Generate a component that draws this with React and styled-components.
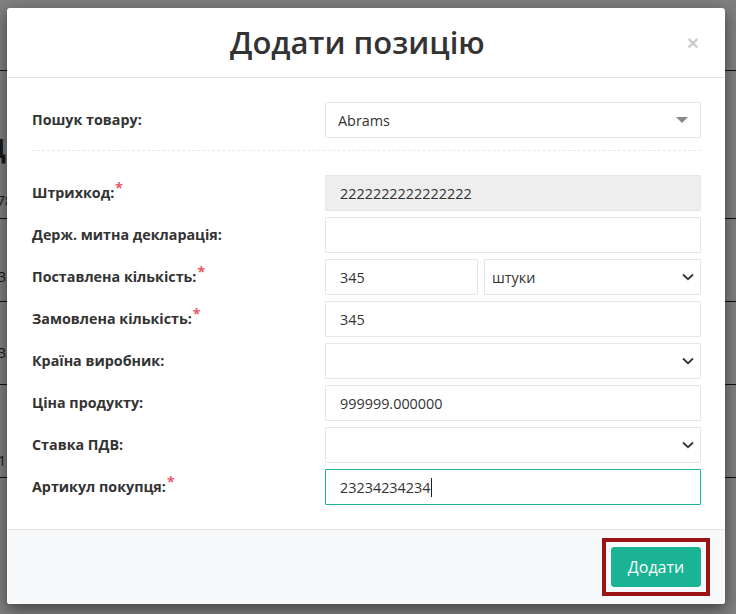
import React from "react";
import styled, { createGlobalStyle } from "styled-components";

const Global = createGlobalStyle`
  html, body { margin: 0; padding: 0; }
  body { font-family: "Open Sans", "Noto Sans", sans-serif; background: #fff; }
  * { box-sizing: border-box; }
`;

const Screen = styled.div`
  position: relative;
  width: 736px;
  height: 614px;
  overflow: hidden;
  background: #fff;
`;

/* ---------- page underneath the modal ---------- */
const BgPage = styled.div`
  display: flex;
  flex-direction: column;
  color: #333;
`;
const BgTopBar = styled.div`
  height: 71px;
  border-bottom: 1px solid #222;
`;
const BgHeading = styled.h2`
  margin: 62px 0 0 -14px;
  font-size: 26px;
  font-weight: 700;
  line-height: 30px;
  height: 28px;
`;
const BgRow = styled.div`
  height: ${(p) => p.$h}px;
  display: flex;
  align-items: flex-end;
  padding-bottom: ${(p) => p.$pb}px;
  border-bottom: 1px solid #222;
  font-size: 14px;
  line-height: 16px;
`;
const BgCell = styled.span`
  margin-left: ${(p) => p.$shift}px;
`;

const Backdrop = styled.div`
  position: absolute;
  inset: 0;
  background: rgba(0, 0, 0, 0.5);
`;

/* ---------- modal ---------- */
const Modal = styled.div`
  position: absolute;
  left: 7px;
  top: 8px;
  width: 718px;
  background: #fff;
  border-radius: 3px;
  box-shadow: 0 5px 15px rgba(0, 0, 0, 0.5);
  display: flex;
  flex-direction: column;
  overflow: hidden;
`;

const Header = styled.div`
  height: 70px;
  border-bottom: 1px solid #e5e5e5;
  display: grid;
  grid-template-columns: 1fr auto;
  align-items: center;
  padding: 0 26px 0 21px;
`;
const Title = styled.h4`
  margin: 0;
  text-align: center;
  font-size: 31px;
  font-weight: 600;
  color: #333;
  line-height: 38px;
  padding-bottom: 2px;
`;
const Close = styled.button`
  border: 0;
  background: transparent;
  padding: 0;
  font-family: "Liberation Sans", Arial, sans-serif;
  font-size: 21px;
  font-weight: 700;
  line-height: 1;
  color: #000;
  opacity: 0.2;
  cursor: pointer;
`;

const Body = styled.div`
  padding: 24px 24px 24px 25px;
  display: flex;
  flex-direction: column;
`;
const Divider = styled.div`
  border-top: 1px dashed #e7eaec;
  margin: 12px 0 24px;
`;
const Fields = styled.div`
  display: flex;
  flex-direction: column;
  gap: 6px;
`;
const Row = styled.div`
  display: grid;
  grid-template-columns: 293px 1fr;
  align-items: center;
  min-height: 36px;
`;
const Label = styled.label`
  font-size: 14.3px;
  font-weight: 700;
  color: #333;
  line-height: 20px;
`;
const Req = styled.span`
  color: #ed5565;
  font-size: 14px;
  position: relative;
  top: -5px;
  margin-left: 1px;
`;
const Pair = styled.div`
  display: grid;
  grid-template-columns: 153px 1fr;
  gap: 6px;
`;

const Input = styled.input`
  width: 100%;
  height: 36px;
  border: 1px solid #e5e6e7;
  border-radius: 1px;
  background: ${(p) => (p.disabled ? "#eeeeee" : "#fff")};
  padding: 0 14px;
  font-family: "Open Sans", sans-serif;
  font-size: 14.4px;
  color: #333;
  outline: none;
`;
const FocusBox = styled.div`
  height: 36px;
  border: 1px solid #1ab394;
  border-radius: 1px;
  padding: 0 14px;
  display: flex;
  align-items: center;
  font-size: 14.4px;
  color: #333;
`;
const Caret = styled.span`
  display: inline-block;
  width: 1px;
  height: 19px;
  background: #222;
`;

const SelectBox = styled.div`
  height: 36px;
  border: 1px solid #e5e6e7;
  border-radius: 1px;
  background: #fff;
  display: flex;
  align-items: center;
  justify-content: space-between;
  padding: 0 ${(p) => p.$pr}px 0 ${(p) => p.$pl}px;
  font-size: 14.4px;
  color: #333;
`;
const Triangle = styled.span`
  width: 0;
  height: 0;
  border-style: solid;
  border-width: 6px 6px 0 6px;
  border-color: #888 transparent transparent transparent;
`;

const Footer = styled.div`
  border-top: 1px solid #e5e5e5;
  background: #f8f9fa;
  padding: 8px 15px 8px 24px;
  display: flex;
  justify-content: flex-end;
`;
const Highlight = styled.div`
  border: 4px solid #9b1313;
  padding: 5px;
  display: flex;
`;
const Button = styled.button`
  width: 90px;
  height: 40px;
  background: #1ab394;
  border: 1px solid #1ab394;
  border-radius: 3px;
  color: #fff;
  font-family: "Open Sans", sans-serif;
  font-size: 16px;
  cursor: pointer;
`;

const Chevron = () => (
  <svg width="12" height="8" viewBox="0 0 12 8">
    <path d="M1 1.5 L6 6.2 L11 1.5" fill="none" stroke="#333" strokeWidth="1.8" />
  </svg>
);

const Field = ({ label, required, children }) => (
  <Row>
    <Label>
      {label}
      {required && <Req>*</Req>}
    </Label>
    {children}
  </Row>
);

export default function App() {
  return (
    <Screen>
      <Global />
      <BgPage>
        <BgTopBar />
        <BgHeading>Д</BgHeading>
        <BgRow $h={58} $pb={9}>
          <BgCell $shift={-3}>78</BgCell>
        </BgRow>
        <BgRow $h={83} $pb={16}>
          <BgCell $shift={-2}>33</BgCell>
        </BgRow>
        <BgRow $h={83} $pb={23}>
          <BgCell $shift={-2}>33</BgCell>
        </BgRow>
        <BgRow $h={93} $pb={8}>
          <BgCell $shift={-2}>1</BgCell>
        </BgRow>
      </BgPage>
      <Backdrop />
      <Modal>
        <Header>
          <Title>Додати позицію</Title>
          <Close aria-label="Close">×</Close>
        </Header>
        <Body>
          <Field label="Пошук товару:">
            <SelectBox $pl={12} $pr={12}>
              <span>Abrams</span>
              <Triangle />
            </SelectBox>
          </Field>
          <Divider />
          <Fields>
            <Field label="Штрихкод:" required>
              <Input disabled defaultValue="2222222222222222" />
            </Field>
            <Field label="Держ. митна декларація:">
              <Input readOnly defaultValue="" />
            </Field>
            <Field label="Поставлена кількість:" required>
              <Pair>
                <Input readOnly defaultValue="345" />
                <SelectBox $pl={7} $pr={6}>
                  <span>штуки</span>
                  <Chevron />
                </SelectBox>
              </Pair>
            </Field>
            <Field label="Замовлена кількість:" required>
              <Input readOnly defaultValue="345" />
            </Field>
            <Field label="Країна виробник:">
              <SelectBox $pl={7} $pr={6}>
                <span />
                <Chevron />
              </SelectBox>
            </Field>
            <Field label="Ціна продукту:">
              <Input readOnly defaultValue="999999.000000" />
            </Field>
            <Field label="Ставка ПДВ:">
              <SelectBox $pl={7} $pr={6}>
                <span />
                <Chevron />
              </SelectBox>
            </Field>
            <Field label="Артикул покупця:" required>
              <FocusBox role="textbox">
                <span>23234234234</span>
                <Caret />
              </FocusBox>
            </Field>
          </Fields>
        </Body>
        <Footer>
          <Highlight>
            <Button>Додати</Button>
          </Highlight>
        </Footer>
      </Modal>
    </Screen>
  );
}
